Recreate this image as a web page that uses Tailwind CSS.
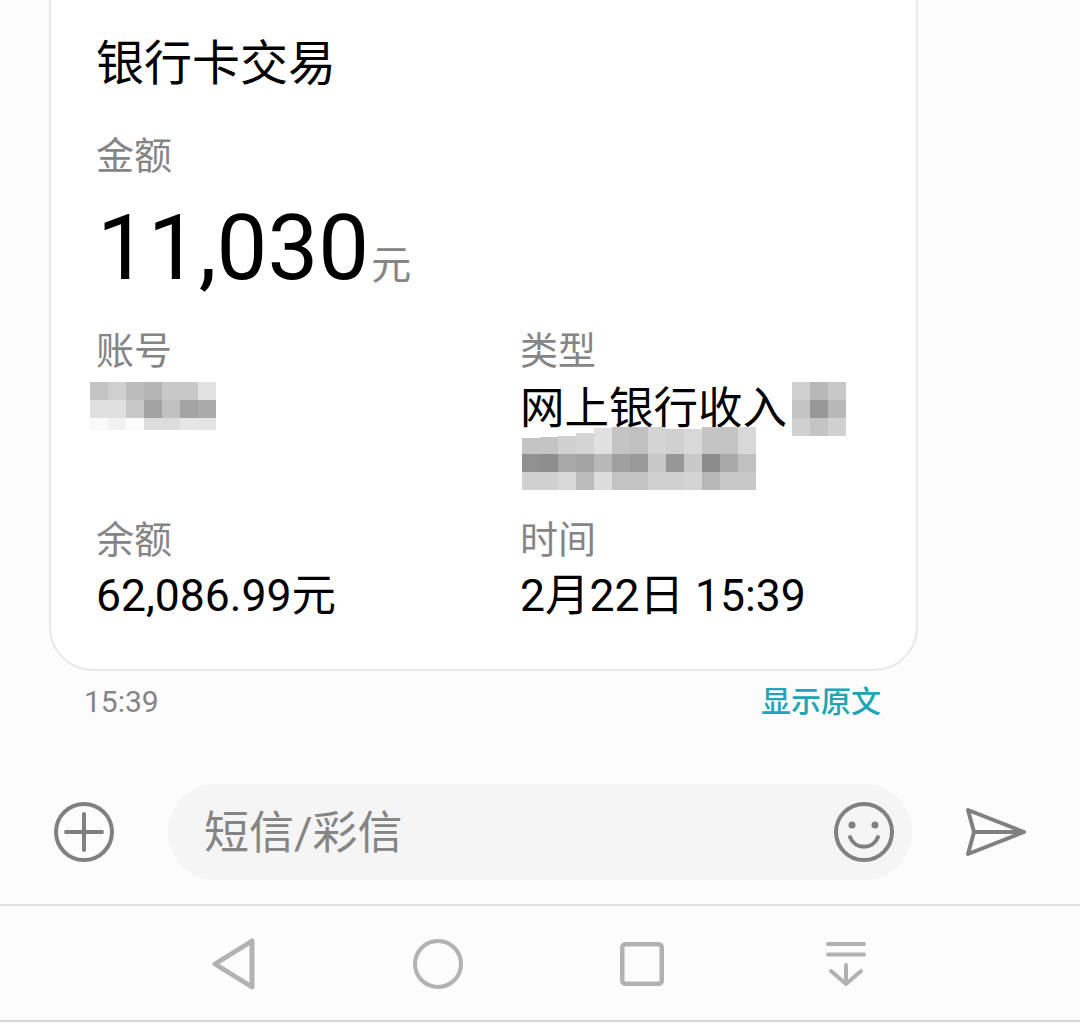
<!DOCTYPE html>
<html lang="zh-CN">
<head>
    <meta charset="UTF-8">
    <meta name="viewport" content="width=device-width, initial-scale=1.0">
    <title>银行卡交易</title>
    <script src="https://cdn.jsdelivr.net/npm/@tailwindcss/browser@4"></script>
</head>
<body class="bg-[#fcfcfc] font-['Roboto','Noto_Sans_CJK_SC',sans-serif]">
    <div class="w-[1080px] h-[1024px] overflow-hidden flex flex-col">

        <!-- card -->
        <div class="ml-[49px] mt-[-44px] w-[869px] h-[715px] shrink-0 bg-white border-2 border-[#e8e8e8] rounded-[44px] pl-[45px] pt-[76px]">
            <h1 class="text-[48px] leading-[60px] text-black">银行卡交易</h1>
            <p class="mt-[40px] text-[38px] leading-[44px] text-[#858585]">金额</p>
            <div class="mt-[25px] h-[90px] flex items-baseline leading-[90px]">
                <span class="text-[90.500px] text-black ml-[1px]">11,030</span>
                <span class="text-[40px] text-[#858585] ml-[2px]">元</span>
            </div>

            <div class="mt-[36px] grid grid-cols-[424px_1fr]">
                <div>
                    <p class="text-[38px] leading-[44px] text-[#858585]">账号</p>
                    <!-- mosaic -->
                    <div class="mt-[9px] grid grid-cols-[repeat(7,18px)] grid-rows-[18px_18px_12px] -ml-[6px]">
                        <i class="bg-[#c4c4c4]"></i><i class="bg-[#cfcfcf]"></i><i class="bg-[#bcbcbc]"></i><i class="bg-[#b4b4b4]"></i><i class="bg-[#c8c8c8]"></i><i class="bg-[#c8c8c8]"></i><i class="bg-[#e2e2e2]"></i>
                        <i class="bg-[#e0e0e0]"></i><i class="bg-[#e0e0e0]"></i><i class="bg-[#c8c8c8]"></i><i class="bg-[#a2a2a2]"></i><i class="bg-[#c0c0c0]"></i><i class="bg-[#a4a4a4]"></i><i class="bg-[#aaaaaa]"></i>
                        <i class="bg-[#fafafa]"></i><i class="bg-[#f2f2f2]"></i><i class="bg-[#fcfcfc]"></i><i class="bg-[#dcdcdc]"></i><i class="bg-[#dcdcdc]"></i><i class="bg-[#e6e6e6]"></i><i class="bg-[#e4e4e4]"></i>
                    </div>
                </div>
                <div class="h-[168px]">
                    <p class="text-[38px] leading-[44px] text-[#858585]">类型</p>
                    <div class="flex items-start">
                        <span class="text-[44.500px] leading-[56px] text-black mt-[8px] w-[272px] shrink-0">网上银行收入</span>
                        <div class="mt-[9px] grid grid-cols-[repeat(3,18px)] grid-rows-[repeat(3,18px)]">
                            <i class="bg-[#d0d0d0]"></i><i class="bg-[#b8b8b8]"></i><i class="bg-[#c8c8c8]"></i>
                            <i class="bg-[#c4c4c4]"></i><i class="bg-[#989898]"></i><i class="bg-[#b8b8b8]"></i>
                            <i class="bg-[#d0d0d0]"></i><i class="bg-[#c4c4c4]"></i><i class="bg-[#d0d0d0]"></i>
                        </div>
                    </div>
                    <!-- mosaic, first row has an uneven top -->
                    <div class="mt-[-10px] ml-[2px] relative">
                        <div class="flex items-end h-[27px]">
                            <i class="block w-[18px] h-[16px] bg-[#c4c4c4]"></i><i class="block w-[18px] h-[17px] bg-[#c4c4c4]"></i><i class="block w-[18px] h-[18px] bg-[#d0d0d0]"></i><i class="block w-[18px] h-[21px] bg-[#d4d4d4]"></i><i class="block w-[18px] h-[26px] bg-[#e0e0e0]"></i><i class="block w-[18px] h-[27px] bg-[#c4c4c4]"></i><i class="block w-[18px] h-[27px] bg-[#c0c0c0]"></i><i class="block w-[18px] h-[27px] bg-[#d4d4d4]"></i><i class="block w-[18px] h-[25px] bg-[#d0d0d0]"></i><i class="block w-[18px] h-[25px] bg-[#d8d8d8]"></i><i class="block w-[18px] h-[27px] bg-[#c4c4c4]"></i><i class="block w-[18px] h-[27px] bg-[#c4c4c4]"></i><i class="block w-[18px] h-[27px] bg-[#d8d8d8]"></i>
                        </div>
                        <div class="grid grid-cols-[repeat(13,18px)] grid-rows-[18px_18px]">
                            <i class="bg-[#929292]"></i><i class="bg-[#8e8e8e]"></i><i class="bg-[#a8a8a8]"></i><i class="bg-[#a4a4a4]"></i><i class="bg-[#b8b8b8]"></i><i class="bg-[#a0a0a0]"></i><i class="bg-[#9a9a9a]"></i><i class="bg-[#c8c8c8]"></i><i class="bg-[#969696]"></i><i class="bg-[#c8c8c8]"></i><i class="bg-[#8c8c8c]"></i><i class="bg-[#a8a8a8]"></i><i class="bg-[#c0c0c0]"></i>
                            <i class="bg-[#d0d0d0]"></i><i class="bg-[#d0d0d0]"></i><i class="bg-[#d8d8d8]"></i><i class="bg-[#bcbcbc]"></i><i class="bg-[#dcdcdc]"></i><i class="bg-[#c4c4c4]"></i><i class="bg-[#c4c4c4]"></i><i class="bg-[#d0d0d0]"></i><i class="bg-[#d0d0d0]"></i><i class="bg-[#d4d4d4]"></i><i class="bg-[#b8b8b8]"></i><i class="bg-[#c8c8c8]"></i><i class="bg-[#c8c8c8]"></i>
                        </div>
                    </div>
                </div>
            </div>

            <div class="mt-[21px] grid grid-cols-[424px_1fr]">
                <div>
                    <p class="text-[38px] leading-[44px] text-[#858585]">余额</p>
                    <p class="mt-[6px] text-[44.500px] leading-[56px] text-black">62,086.99元</p>
                </div>
                <div>
                    <p class="text-[38px] leading-[44px] text-[#858585]">时间</p>
                    <p class="mt-[6px] text-[44.500px] leading-[56px] text-black">2月22日 15:39</p>
                </div>
            </div>
        </div>

        <!-- meta row -->
        <div class="h-[113px] shrink-0 flex justify-between items-start pl-[84px] pr-[199px] pt-[12px]">
            <span class="text-[30px] leading-[38px] text-[#858585]">15:39</span>
            <span class="text-[30px] leading-[38px] font-medium text-[#20a5b5]">显示原文</span>
        </div>

        <!-- input row -->
        <div class="h-[96px] shrink-0 flex items-center">
            <svg class="ml-[54px] shrink-0" width="60" height="60" viewBox="0 0 60 60" fill="none" stroke="#808080" stroke-width="4" stroke-linecap="round">
                <circle cx="30" cy="30" r="28"/>
                <path d="M12 30H48M30 12V48"/>
            </svg>
            <div class="ml-[54px] w-[744px] h-[96px] shrink-0 rounded-full bg-[#f5f5f5] flex items-center pl-[36px] pr-[18px]">
                <span class="flex-1 mt-[4px] text-[45px] leading-[56px] text-[#858585]">短信/彩信</span>
                <svg class="shrink-0" width="60" height="60" viewBox="0 0 60 60" fill="none" stroke="#808080" stroke-width="4" stroke-linecap="round">
                    <circle cx="30" cy="30" r="28"/>
                    <circle cx="18" cy="23" r="3.500" fill="#808080" stroke="none"/>
                    <circle cx="41" cy="23" r="3.500" fill="#808080" stroke="none"/>
                    <path d="M16 35C21 48 39 48 44 35"/>
                </svg>
            </div>
            <svg class="ml-[53px] shrink-0" width="64" height="60" viewBox="0 0 64 60" fill="none" stroke="#808080" stroke-width="4" stroke-linecap="round" stroke-linejoin="round">
                <path d="M3 8L59 30L3 52L9 30ZM9 30H59"/>
            </svg>
        </div>

        <!-- nav bar -->
        <div class="mt-[24px] h-[118px] shrink-0 border-t-2 border-b-2 border-t-[#e2e2e2] border-b-[#d8d8d8] pt-[2px] flex items-center">
            <svg class="ml-[212px] shrink-0" width="44" height="52" viewBox="0 0 44 52" fill="none" stroke="#b2b2b2" stroke-width="5" stroke-linejoin="round">
                <path d="M3 26L40 3V49Z"/>
            </svg>
            <svg class="ml-[157px] shrink-0" width="50" height="50" viewBox="0 0 50 50" fill="none" stroke="#b2b2b2" stroke-width="4">
                <circle cx="25" cy="25" r="23"/>
            </svg>
            <svg class="ml-[157px] shrink-0" width="44" height="44" viewBox="0 0 44 44" fill="none" stroke="#b2b2b2" stroke-width="4.500">
                <rect x="2.250" y="2.250" width="39.500" height="39.500" rx="3"/>
            </svg>
            <svg class="ml-[162px] shrink-0" width="40" height="46" viewBox="0 0 40 46" fill="none" stroke="#b2b2b2" stroke-width="4" stroke-linecap="round" stroke-linejoin="round">
                <path d="M2 3H38M2 13.500H38M20 24V43M5 30L20 43L35 30"/>
            </svg>
        </div>
    </div>
</body>
</html>
